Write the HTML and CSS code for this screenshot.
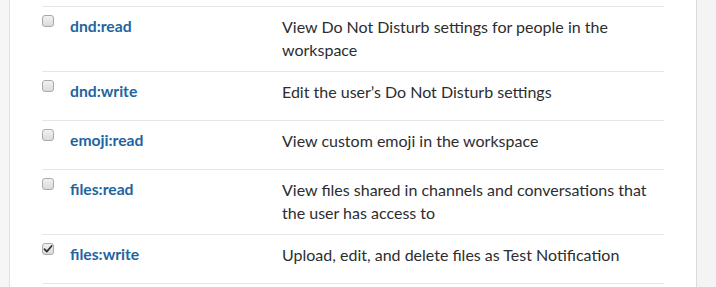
FILE: index.html
```html
<!DOCTYPE html>
<html lang="en">
<head>
  <meta charset="UTF-8" />
  <title>Permission Scopes</title>
  <link rel="stylesheet" href="styles.css">
</head>
<body>
  <div class="side"></div>
  <div class="panel">
    <div class="scopes">
      <div class="scope-row">
        <span class="check"></span>
        <span class="scope-name">dnd:read</span>
        <span class="scope-desc">View Do Not Disturb settings for people in the workspace</span>
      </div>
      <div class="scope-row">
        <span class="check"></span>
        <span class="scope-name">dnd:write</span>
        <span class="scope-desc">Edit the user’s Do Not Disturb settings</span>
      </div>
      <div class="scope-row">
        <span class="check"></span>
        <span class="scope-name">emoji:read</span>
        <span class="scope-desc">View custom emoji in the workspace</span>
      </div>
      <div class="scope-row">
        <span class="check"></span>
        <span class="scope-name">files:read</span>
        <span class="scope-desc">View files shared in channels and conversations that the user has access to</span>
      </div>
      <div class="scope-row">
        <span class="check checked">
          <svg width="10" height="10" viewBox="0 0 10 10"><path d="M1.5 5.2 L3.8 7.6 L8.6 2" fill="none" stroke="#333" stroke-width="1.8" stroke-linecap="round" stroke-linejoin="round"/></svg>
        </span>
        <span class="scope-name">files:write</span>
        <span class="scope-desc">Upload, edit, and delete files as Test Notification</span>
      </div>
    </div>
  </div>
  <div class="rest"></div>
</body>
</html>
```

FILE: styles.css
```css
body {
  margin: 0;
  display: flex;
  height: 287px;
  overflow: hidden;
  font-family: Lato, "Liberation Sans", sans-serif;
  background: #f4f4f4;
}
.side {
  width: 9px;
  background: #f6f6f6;
  border-right: 1px solid #e2e2e2;
}
.panel {
  width: 622px;
  padding: 0 32px;
  background: #fff;
  border-right: 1px solid #dcdcdc;
}
.rest {
  flex: 1;
}
.scopes {
  margin-top: 6px;
  border-top: 1px solid #e6e6e6;
}
.scope-row {
  display: flex;
  align-items: flex-start;
  padding: 8px 0 10px;
  min-height: 30px;
  border-bottom: 1px solid #e6e6e6;
  font-size: 16px;
  line-height: 23px;
}
.check {
  width: 10px;
  height: 10px;
  border: 1px solid #aaa;
  border-radius: 3px;
  background: linear-gradient(#f2f2f2, #dadada);
  display: flex;
  align-items: center;
  justify-content: center;
  flex-shrink: 0;
}
.check svg {
  display: block;
}
.scope-name {
  width: 212px;
  margin-left: 16px;
  flex-shrink: 0;
  font-weight: bold;
  font-size: 15.7px;
  color: #1e64a0;
}
.scope-desc {
  flex: 1;
  color: #2c2d30;
}
```
